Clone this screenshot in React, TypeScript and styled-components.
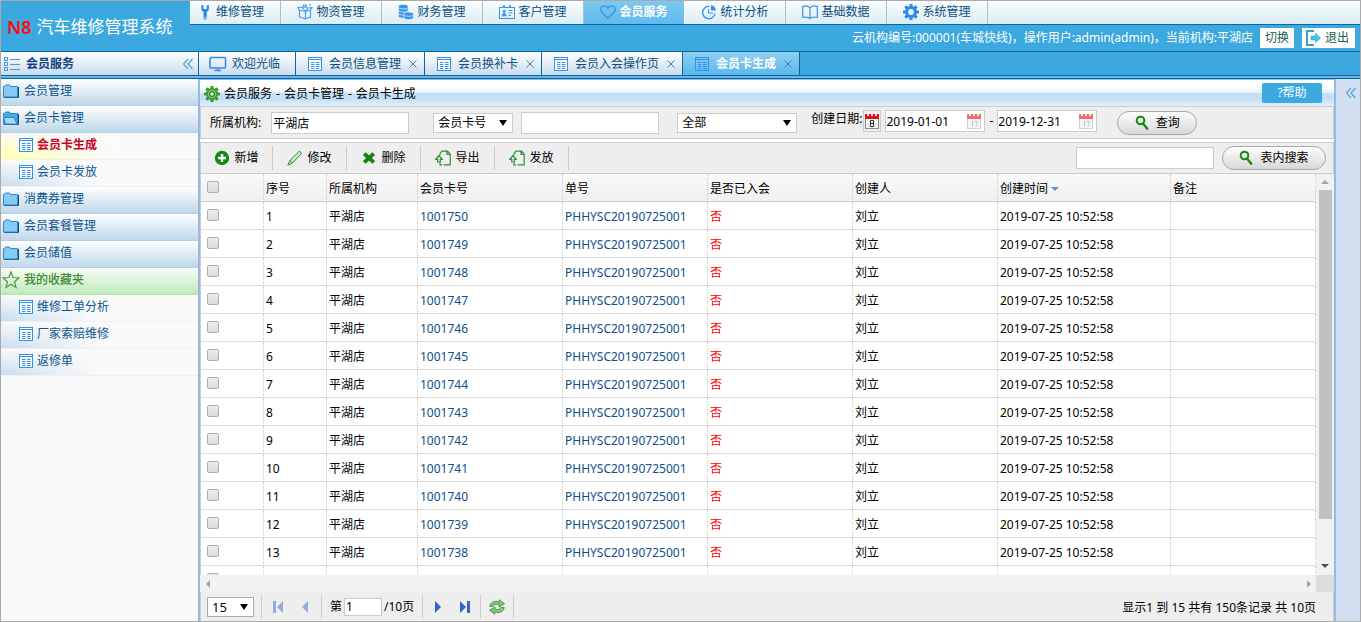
import React from "react";
import styled, { createGlobalStyle, css } from "styled-components";

const GlobalStyle = createGlobalStyle`
  *, *::before, *::after { box-sizing: border-box; }
  body { margin: 0; }
  body, button, input, select {
    font-family: "Noto Sans", "Noto Sans CJK SC", sans-serif;
    font-size: 12px;
    line-height: 16px;
    color: #000;
  }
  button { margin: 0; padding: 0; border: 0; background: none; cursor: pointer; white-space: nowrap; }
  a { text-decoration: none; color: inherit; }
  svg { display: block; flex: none; }
`;

/* ---------- icons ---------- */

const WrenchIcon = () => (
  <svg width="16" height="16" viewBox="0 0 16 16" fill="#2e8ae6">
    <path d="M4.300 1v3.800c0 1.500 1 2.600 2.200 3.100V14a1.600 1.600 0 0 0 3.200 0V7.900c1.300-.5 2.200-1.600 2.200-3.100V1L9.700 1.500V5H6.500V1.500z" />
    <circle cx="8.100" cy="13.800" r=".8" fill="#eef8fb" />
  </svg>
);

const BoxIcon = () => (
  <svg width="16" height="16" viewBox="0 0 16 16" fill="none" stroke="#4a9be8" strokeWidth="1.200" strokeLinejoin="round">
    <path d="M2.500 6v7l6 2 5-2V6M2.500 6l6 1.500L13.500 6M8.500 7.500V15M2.500 6L.7 3.500 5 3l3.500 4.500L11 4l4.300-.3L13.500 6" />
    <path d="M6.500 1h3v2.200h-3zM12 1l2-.3" />
  </svg>
);

const CoinsIcon = () => (
  <svg width="16" height="16" viewBox="0 0 16 16" fill="#3d93ea" stroke="#e9f6fb" strokeWidth=".7">
    <path d="M.4 3v9.200c0 1.100 2 2 4.900 2s4.900-.9 4.900-2V3z" />
    <ellipse cx="5.300" cy="2.700" rx="4.900" ry="2.200" />
    <path d="M.4 6c0 1.200 2 2.100 4.900 2s4.900-.9 4.900-2M.4 9.200c0 1.200 2 2.100 4.900 2" fill="none" />
    <path d="M5.800 10.500v3c0 1.200 2 2.200 4.900 2.200s4.900-1 4.900-2.200v-3z" />
    <ellipse cx="10.700" cy="10.200" rx="4.900" ry="2.100" />
  </svg>
);

const IdCardIcon = () => (
  <svg width="16" height="16" viewBox="0 0 16 16" fill="none" stroke="#3d93ea">
    <rect x=".5" y="3.500" width="15" height="11" />
    <path d="M5 1v3M11 1v3" strokeWidth="1.800" />
    <circle cx="5.200" cy="7.200" r="1.500" fill="#3d93ea" stroke="none" />
    <path d="M2.800 12.200c0-4.200 4.800-4.200 4.800 0z" fill="#3d93ea" stroke="none" />
    <path d="M9.500 6.500h4M9.500 9h4M9.500 11.500h2.500" />
  </svg>
);

const HeartIcon = () => (
  <svg width="16" height="16" viewBox="0 0 16 16" fill="none" stroke="#2e8ae6" strokeWidth="1.100">
    <path d="M8 14.500L1.800 8.200C-.6 5.300 1 1.700 4.200 1.700c1.900 0 3.200 1.200 3.800 2.400.6-1.200 1.900-2.400 3.800-2.400 3.200 0 4.800 3.600 2.400 6.500z" />
  </svg>
);

const PieIcon = () => (
  <svg width="16" height="16" viewBox="0 0 16 16" fill="none" stroke="#3d93ea" strokeWidth="1.400">
    <path d="M8 2.300A6.200 6.200 0 1 0 14 9.500" />
    <path d="M7.500 5v4H12" strokeWidth="1.100" />
    <path d="M9.800 1.200v5.300h5C14.800 3.400 12.800 1.200 9.800 1.200z" fill="#3d93ea" stroke="none" />
  </svg>
);

const BookIcon = () => (
  <svg width="16" height="16" viewBox="0 0 16 16" fill="none" stroke="#3d93ea" strokeWidth="1.200" strokeLinejoin="round">
    <path d="M8 4C6.500 2 3.500 1.500.7 2.300v11.200c2.800-.6 5.800-.4 7.300 1.200 1.500-1.600 4.500-1.800 7.300-1.200V2.300C12.500 1.500 9.500 2 8 4zM8 4v10.500" />
  </svg>
);

const GearIcon = ({ green }: { green?: boolean }) => (
  <svg width="16" height="16" viewBox="0 0 16 16" fill={green ? "#3c9a33" : "#2e8ae6"}>
    {[0, 45, 90, 135].map((a) => (
      <rect key={a} x="6.400" y="0" width="3.200" height="16" rx=".5" transform={`rotate(${a} 8 8)`} />
    ))}
    <circle cx="8" cy="8" r="6" />
    {green && <circle cx="8" cy="8" r="4.200" fill="#7ccf63" />}
    <circle cx="8" cy="8" r="2.900" fill={green ? "#2f7d2a" : "#eef8fb"} />
    {green && <circle cx="8" cy="8" r="1.700" fill="#f2faff" />}
  </svg>
);

const ListIcon = () => (
  <svg width="16" height="16" viewBox="0 0 16 16" fill="none" stroke="#3d93ea">
    <path d="M.5 1.500h3v3h-3zM.5 6.500h3v3h-3zM.5 11.500h3v3h-3z" />
    <path d="M6 3.500h10M6 8.500h10M6 13.500h10" stroke="#5f92bd" />
  </svg>
);

const ChevronsIcon = () => (
  <svg width="12" height="12" viewBox="0 0 12 12" fill="none" stroke="#58a3de" strokeWidth="1.200">
    <path d="M6 1L1.500 6 6 11M10.500 1L6 6l4.500 5" />
  </svg>
);

const MonitorIcon = () => (
  <svg width="18" height="16" viewBox="0 0 18 16" fill="none" stroke="#2e8ae6" strokeWidth="1.500">
    <rect x="1" y="1.500" width="15.500" height="10.500" rx="1" />
    <path d="M8.700 12v2.500M5.500 14.500h6.500" />
  </svg>
);

const TableIcon = ({ plain }: { plain?: boolean }) => (
  <svg width="14" height="14" viewBox="0 0 14 14" fill="none" stroke="#2e90f0">
    <rect x=".5" y=".5" width="13" height="13" fill={plain ? "none" : "#fff"} />
    <path d="M1 2.500h12" />
    <path d="M3 5.500h3.500M3 7.500h3.500M3 9.500h3.500M3 11.500h3.500M8 5.500h3.500M8 7.500h3.500M8 9.500h3.500M8 11.500h3.500" />
  </svg>
);

const CloseIcon = () => (
  <svg width="8" height="8" viewBox="0 0 8 8" stroke="#3f7fb5" fill="none">
    <path d="M.5.500l7 7M7.500.500l-7 7" />
  </svg>
);

const FolderIcon = ({ open }: { open?: boolean }) => (
  <svg width="16" height="16" viewBox="0 0 16 16">
    <path d="M1 14.500h14.500V4" fill="none" stroke="#104a72" />
    <path d="M.5 3.500h1l1-1.500h4l1 1.500h7v10.500H.5z" fill={open ? "#4aa9df" : "#86caf8"} stroke="#2a8acb" />
    {open && <path d="M.5 7.500h10.500l3 6.500H2.500z" fill="#a3daf8" stroke="#2a8acb" />}
  </svg>
);

const StarIcon = () => (
  <svg width="16" height="16" viewBox="1 1 16 16" fill="none" stroke="#4f9a45" strokeWidth="1.200" overflow="visible">
    <path d="M9 1l2.100 5.500 5.900.4-4.500 3.800 1.500 5.800L9 13.300l-5 3.200 1.500-5.800L1 6.900l5.900-.4z" />
  </svg>
);

const ExitIcon = () => (
  <svg width="16" height="16" viewBox="0 0 16 16">
    <path d="M9 1H2v14h7" fill="none" stroke="#3e9fc4" strokeWidth="2" />
    <path d="M6 6h4.500V3.200L15.500 8l-5 4.800V10H6z" fill="#3dc8ee" stroke="#2ba6d2" strokeWidth=".6" />
  </svg>
);

const SearchIcon = () => (
  <svg width="14" height="16" viewBox="0 0 14 16" fill="none" stroke="#128a12">
    <circle cx="5.500" cy="5.500" r="3.800" strokeWidth="2" />
    <path d="M8 8.500l4.300 5.200" strokeWidth="2.400" strokeLinecap="round" />
  </svg>
);

const CalendarIcon = ({ faded }: { faded?: boolean }) => (
  <svg width="16" height="16" viewBox="0 0 16 16" opacity={faded ? 0.6 : 1}>
    <rect x="1.500" y="5.500" width="13" height="10" fill="#f1f1f1" stroke={faded ? "#b5b5b5" : "#8b8b8b"} />
    <rect x="1" y="1" width="14" height="5" fill="#d81512" />
    <path d="M4 0v3M8 0v3M12 0v3" stroke="#fff" strokeWidth="1.600" />
    <path
      d={faded ? "M5.500 8.500h1v5M8.500 8.500h3l-1.500 5" : "M6.500 7.500h3v6h-3zM6.500 10.500h3"}
      fill="none"
      stroke={faded ? "#999" : "#333"}
    />
  </svg>
);

const PlusIcon = () => (
  <svg width="16" height="16" viewBox="0 0 16 16">
    <circle cx="8" cy="8" r="7.200" fill="#0f8a14" />
    <path d="M8 4v8M4 8h8" stroke="#fff" strokeWidth="2.400" />
  </svg>
);

const PencilIcon = () => (
  <svg width="16" height="16" viewBox="0 0 16 16" fill="#cfe9cd" stroke="#2f8f33">
    <path d="M.8 15.200L3 10.400 12.300 1.200l2.500 2L5.500 13z" />
    <path d="M3 10.400L5.500 13" />
  </svg>
);

const CrossIcon = () => (
  <svg width="16" height="16" viewBox="0 0 16 16" stroke="#118316" strokeWidth="4">
    <path d="M3.200 3.600l9.600 8.800M12.800 3.600l-9.600 8.800" />
  </svg>
);

const ExportIcon = () => (
  <svg width="16" height="16" viewBox="0 0 16 16" fill="none" stroke="#2f8f33" strokeWidth="1.200">
    <path d="M5 5V3.500L7 1.200h5.500L15.200 4v10.800H8.500M12 1.500V4.500h3" />
    <path d="M4 5.500L.8 9.300h1.900V12H5.300V9.300h1.900zM5 12.800v2h2" fill="#e4f3e2" />
  </svg>
);

const RefreshIcon = () => (
  <svg width="16" height="16" viewBox="0 0 16 16" fill="#7cc873" stroke="#3c8c37" strokeWidth=".8">
    <path d="M.8 7.500C1.200 3.200 6 1.200 10.300 3V.8L15.500 4.800 10 8V5.800C7.300 4.800 5 5.500 4.200 7.500z" />
    <path d="M15.200 8.500c-.4 4.300-5.200 6.300-9.500 4.500v2.200L.5 11.200 6 8v2.200c2.700 1 5 .3 5.800-1.700z" />
  </svg>
);

const PagerIcon = ({ kind }: { kind: "first" | "prev" | "next" | "last" }) => {
  const enabled = kind === "next" || kind === "last";
  const bar = kind === "first" || kind === "last";
  return (
    <svg width="12" height="14" viewBox="0 0 12 14" fill={enabled ? "#2f66cc" : "#8facdf"}>
      <g transform={enabled ? undefined : "translate(12 0) scale(-1 1)"}>
        <path d={bar ? "M1 1l6 6-6 6z" : "M3 1l6 6-6 6z"} />
        {bar && <rect x="8" y="1" width="3" height="12" />}
      </g>
    </svg>
  );
};

/* ---------- page header ---------- */

const Page = styled.div`
  display: flex;
  flex-direction: column;
  height: 100vh;
  min-width: 1200px;
  overflow: hidden;
  border: 1px solid #aaaaaa;
  background: #fff;
`;

const Header = styled.header`
  display: flex;
  height: 50px;
  flex: none;
  background: #3ba9e0;
`;

const Brand = styled.h1`
  display: flex;
  align-items: center;
  gap: 5px;
  width: 189px;
  flex: none;
  margin: 0;
  padding: 2px 0 0 6px;
  font-size: 17px;
  line-height: 24px;
  font-weight: 400;
  color: #fff;
  white-space: nowrap;
`;

const BrandMark = styled.span`
  font-size: 18px;
  font-weight: 600;
  color: #ff0a0a;
`;

const HeaderMain = styled.div`
  flex: 1;
  min-width: 0;
`;

const Nav = styled.nav`
  display: flex;
  height: 24px;
  border-bottom: 1px solid #0a679f;
  background: linear-gradient(#fbfdfe, #d9edf4);
`;

const NavLink = styled.a<{ $active?: boolean }>`
  display: flex;
  align-items: center;
  justify-content: center;
  gap: 3px;
  width: 101px;
  padding-bottom: 1px;
  border-right: 1px solid #a9bfc9;
  color: #0d4f80;
  &:first-child {
    justify-content: flex-start;
    width: 91px;
    padding-left: 7px;
  }
  ${(p) =>
    p.$active &&
    css`
      border-right-color: #fff;
      background: linear-gradient(#7cc8f1, #5fbaf0);
      color: #fff;
      font-weight: 700;
    `}
`;

const UserBar = styled.div`
  display: flex;
  align-items: center;
  justify-content: flex-end;
  gap: 7px;
  padding: 3px 5px 0 0;
  color: #fff;
`;

const UserButton = styled.button`
  display: flex;
  align-items: center;
  gap: 4px;
  height: 20px;
  padding: 0 5px;
  background: #fff;
  color: #17614f;
  & + & { margin-left: 1px; padding: 0 6px 0 3px; }
`;

/* ---------- tab strip ---------- */

const TabStrip = styled.div`
  display: flex;
  height: 25px;
  flex: none;
  border-top: 1px solid #0a679f;
  border-bottom: 1px solid #0a679f;
  background: #3ba9e0;
`;

const StripLine = styled.div`
  height: 3px;
  flex: none;
  border-bottom: 1px solid #0a679f;
  background: #62b8ea;
`;

const SideTitle = styled.div`
  display: flex;
  align-items: center;
  gap: 6px;
  width: 198px;
  flex: none;
  padding: 0 4px 0 3px;
  border-right: 1px solid #0a679f;
  background: linear-gradient(#fff, #c9dcee);
  color: #10427f;
  font-weight: 700;
  & > span { flex: 1; }
`;

const Tab = styled.div<{ $active?: boolean }>`
  display: flex;
  align-items: center;
  padding: 1px 7px 0 12px;
  border-right: 1px solid #0a679f;
  background: ${(p) => (p.$active ? "linear-gradient(#8fd0f3, #5cb7ea)" : "linear-gradient(#fff, #c9dcee)")};
  color: ${(p) => (p.$active ? "#fff" : "#0d4f80")};
  font-weight: ${(p) => (p.$active ? 700 : 400)};
  & > a { display: flex; align-items: center; gap: 7px; }
  & > button { margin-left: 8px; }
`;

const HomeTab = styled(Tab)`
  padding: 1px 15px 0 10px;
  & > a { gap: 5px; }
`;

/* ---------- body columns ---------- */

const Body = styled.div`
  display: flex;
  flex: 1;
  min-height: 0;
`;

const Sidebar = styled.aside`
  width: 197px;
  flex: none;
  background: #fafafa;
`;

const Group = styled.a<{ $green?: boolean }>`
  display: flex;
  align-items: center;
  gap: 5px;
  height: 27px;
  padding: 0 2px 3px;
  border-top: 1px solid #fff;
  border-bottom: 1px solid ${(p) => (p.$green ? "#b5e2b0" : "#b0d0e8")};
  background: ${(p) => (p.$green ? "linear-gradient(#f5fbf4, #bfeabd)" : "linear-gradient(#fbfdfe, #bfd7ea)")};
  color: ${(p) => (p.$green ? "#3c8a30" : "#0d5590")};
  font-weight: ${(p) => (p.$green ? 500 : 400)};
`;

const SubItem = styled.a<{ $active?: boolean }>`
  display: flex;
  align-items: center;
  gap: 4px;
  height: 27px;
  padding: 0 0 3px 18px;
  border-bottom: 1px solid #f0f0f3;
  background:
    linear-gradient(#fafafa, rgba(250, 250, 250, 0)),
    linear-gradient(90deg, ${(p) => (p.$active ? "#ffffae, #fafafa 60%" : "#c8dcee, #fafafa 50%")});
  color: ${(p) => (p.$active ? "#c8052c" : "#0d5590")};
  font-weight: ${(p) => (p.$active ? 700 : 400)};
`;

const Main = styled.main`
  display: flex;
  flex-direction: column;
  flex: 1;
  min-width: 0;
  border: solid #98b9e8;
  border-width: 1px 2px 0;
  background: #fff;
`;

const RightRail = styled.aside`
  width: 24px;
  flex: none;
  padding: 8px 0 0 9px;
  background: #d2dff1;
`;

const TitleBar = styled.div`
  display: flex;
  align-items: center;
  justify-content: space-between;
  height: 26px;
  flex: none;
  padding: 0 12px 0 4px;
  background: linear-gradient(#fff 30%, #e6f2fb 48%, #c3e0f6 50%, #c6e1f6 75%, #e2f0fa);
`;

const Crumb = styled.h2`
  display: flex;
  align-items: center;
  gap: 4px;
  margin: 0;
  padding-top: 2px;
  font-size: 12px;
  font-weight: 400;
`;

const HelpButton = styled.button`
  width: 60px;
  height: 20px;
  border-radius: 2px;
  background: #3ba9e0;
  color: #fff;
`;

/* ---------- filter and tool bars ---------- */

const FilterBar = styled.form`
  display: flex;
  align-items: center;
  height: 33px;
  flex: none;
  padding-left: 9px;
  border: 1px solid #cccccc;
  background: #eeeeee;
`;

const Field = styled.label`
  display: flex;
  align-items: center;
  gap: 10px;
  margin-right: 24px;
  white-space: nowrap;
`;

const TextInput = styled.input`
  width: 138px;
  height: 22px;
  padding: 0 1px;
  border: 1px solid #cccccc;
  background: #fff;
  outline: 0;
`;

const SelectBox = styled.span<{ $w: number }>`
  position: relative;
  display: inline-block;
  width: ${(p) => p.$w}px;
  height: 20px;
  &::after {
    content: "";
    position: absolute;
    top: 7px;
    right: 6px;
    border: solid transparent;
    border-width: 6px 4px 0;
    border-top-color: #000;
    pointer-events: none;
  }
  & > select {
    appearance: none;
    display: block;
    width: 100%;
    height: 100%;
    padding: 0 4px;
    border: 1px solid #cccccc;
    border-radius: 0;
    background: #fff;
  }
`;

const FieldSelect = styled(SelectBox)`
  margin-right: 8px;
`;

const StatusSelect = styled(SelectBox)`
  margin-left: 18px;
`;

const PageSizeSelect = styled(SelectBox)`
  & > select {
    border-color: #aaaaaa;
    font-size: 13px;
  }
`;

const DateGroup = styled.fieldset`
  display: flex;
  align-items: center;
  margin: 0 20px 3px 14px;
  padding: 0;
  border: 0;
  white-space: nowrap;
`;

const DateLabel = styled.label`
  padding: 0 1px 4px 0;
`;

const CalendarButton = styled.button`
  display: flex;
  align-items: center;
  justify-content: center;
  width: 18px;
  height: 22px;
  margin-right: 4px;
  border: 1px solid #cccccc;
`;

const DateBox = styled.span`
  display: flex;
  align-items: center;
  height: 22px;
  padding-right: 2px;
  border: 1px solid #cccccc;
  background: #fff;
  & > input { width: 80px; height: 20px; padding: 0; border: 0; outline: 0; background: none; }
`;

const Dash = styled.span`
  padding: 0 4px;
`;

const PillButton = styled.button<{ $w: number }>`
  display: flex;
  align-items: center;
  justify-content: center;
  gap: 7px;
  width: ${(p) => p.$w}px;
  height: 24px;
  border: 1px solid #a8a8a8;
  border-radius: 12px;
  background: linear-gradient(#fdfdfd, #d8d8d8);
`;

const Toolbar = styled.div`
  display: flex;
  align-items: center;
  height: 32px;
  flex: none;
  margin-top: 3px;
  padding-right: 7px;
  border: 1px solid #cccccc;
  background: #eeeeee;
`;

const ToolButton = styled.button`
  display: flex;
  align-items: center;
  justify-content: center;
  gap: 4px;
  width: 74px;
  height: 24px;
  border-right: 1px solid #cccccc;
  &:first-child { width: 72px; }
`;

const TableSearch = styled.div`
  display: flex;
  align-items: center;
  gap: 8px;
  margin-left: auto;
`;

/* ---------- grid ---------- */

const GridArea = styled.div`
  display: grid;
  grid-template-columns: minmax(0, 1fr) 18px;
  grid-template-rows: minmax(0, 1fr) 17px;
  flex: 1;
  min-height: 0;
`;

const GridView = styled.div`
  overflow: hidden;
  border-left: 1px solid #cccccc;
`;

const Grid = styled.table`
  width: 100%;
  table-layout: fixed;
  border-collapse: separate;
  border-spacing: 0;
  & th, & td {
    height: 28px;
    padding: 2px 2px 0;
    border-right: 1px dotted #cccccc;
    border-bottom: 1px solid #dddddd;
    text-align: left;
    font-weight: 400;
    white-space: nowrap;
  }
  & th { background: linear-gradient(#f9f9f9, #f0f0f0); border-bottom-color: #cccccc; }
  & th:first-child, & td:first-child { padding: 0 0 1px 6px; }
  & input {
    appearance: none;
    display: block;
    width: 12px;
    height: 12px;
    margin: 0;
    border: 1px solid #adadad;
    border-radius: 2px;
    background: linear-gradient(#ececec, #dcdcdc);
  }
`;

const CellLink = styled.a`
  color: #0d4f8b;
`;

const Alert = styled.span`
  color: #ff0000;
`;

const SortMark = styled.span`
  display: inline-block;
  margin: 0 0 2px 3px;
  border: solid transparent;
  border-width: 4px 4px 0;
  border-top-color: #5b8fd6;
`;

const VScroll = styled.div`
  display: flex;
  flex-direction: column;
  align-items: center;
  justify-content: space-between;
  padding: 6px 0 7px;
  background: #f1f1f1;
`;

const VThumb = styled.div`
  width: 13px;
  flex: 1;
  margin: 6px 0 45px;
  background: #c1c1c1;
`;

const HScroll = styled.div`
  display: flex;
  align-items: center;
  justify-content: space-between;
  padding: 0 5px 0 6px;
  background: #f1f1f1;
`;

const Corner = styled.div`
  background: #dcdcdc;
`;

const Arrow = styled.i<{ $dir: "up" | "down" | "left" | "right" }>`
  flex: none;
  border: 4px solid transparent;
  ${(p) => p.$dir === "up" && css`border-top-width: 0; border-bottom-color: #a3a3a3;`}
  ${(p) => p.$dir === "down" && css`border-bottom-width: 0; border-top-color: #505050;`}
  ${(p) => p.$dir === "left" && css`border-left-width: 0; border-right-color: #a3a3a3;`}
  ${(p) => p.$dir === "right" && css`border-right-width: 0; border-left-color: #a3a3a3;`}
`;

/* ---------- pager ---------- */

const Pager = styled.footer`
  display: flex;
  align-items: center;
  height: 29px;
  flex: none;
  padding: 0 17px 0 6px;
  border: solid #cccccc;
  border-width: 0 1px;
  background: #eeeeee;
`;

const PagerGroup = styled.div<{ $pad: number; $gap: number }>`
  display: flex;
  align-items: center;
  gap: ${(p) => p.$gap}px;
  height: 24px;
  padding: 0 ${(p) => p.$pad}px;
  border-right: 1px solid #cccccc;
  white-space: nowrap;
`;

const SizeGroup = styled(PagerGroup)`
  padding-left: 0;
`;

const PageInput = styled.input`
  width: 38px;
  height: 18px;
  padding: 0 1px;
  border: 1px solid #cccccc;
  background: #fff;
`;

const Summary = styled.p`
  margin: 0 0 0 auto;
  padding-top: 3px;
`;

/* ---------- data ---------- */

const navItems = [
  { label: "维修管理", icon: <WrenchIcon /> },
  { label: "物资管理", icon: <BoxIcon /> },
  { label: "财务管理", icon: <CoinsIcon /> },
  { label: "客户管理", icon: <IdCardIcon /> },
  { label: "会员服务", icon: <HeartIcon />, active: true },
  { label: "统计分析", icon: <PieIcon /> },
  { label: "基础数据", icon: <BookIcon /> },
  { label: "系统管理", icon: <GearIcon /> },
];

const tabs = ["会员信息管理", "会员换补卡", "会员入会操作页", "会员卡生成"];
const currentTab = "会员卡生成";

const tools = [
  { label: "新增", icon: <PlusIcon /> },
  { label: "修改", icon: <PencilIcon /> },
  { label: "删除", icon: <CrossIcon /> },
  { label: "导出", icon: <ExportIcon /> },
  { label: "发放", icon: <ExportIcon /> },
];

const columnWidths = [63, 63, 91, 145, 145, 145, 145, 173];
const columns = ["序号", "所属机构", "会员卡号", "单号", "是否已入会", "创建人", "创建时间", "备注"];
const rows = Array.from({ length: 13 }, (_, i) => ({ no: i + 1, card: 1001750 - i }));

export default function App() {
  return (
    <>
      <GlobalStyle />
      <Page>
        <Header>
          <Brand>
            <BrandMark>N8</BrandMark>
            汽车维修管理系统
          </Brand>
          <HeaderMain>
            <Nav>
              {navItems.map((n) => (
                <NavLink key={n.label} href="#" $active={n.active}>
                  {n.icon}
                  <span>{n.label}</span>
                </NavLink>
              ))}
            </Nav>
            <UserBar>
              <span>云机构编号:000001(车城快线)，操作用户:admin(admin)，当前机构:平湖店</span>
              <UserButton>切换</UserButton>
              <UserButton>
                <ExitIcon />
                退出
              </UserButton>
            </UserBar>
          </HeaderMain>
        </Header>

        <TabStrip>
          <SideTitle>
            <ListIcon />
            <span>会员服务</span>
            <button aria-label="收起菜单">
              <ChevronsIcon />
            </button>
          </SideTitle>
          <HomeTab>
            <a href="#">
              <MonitorIcon />
              <span>欢迎光临</span>
            </a>
          </HomeTab>
          {tabs.map((t) => (
            <Tab key={t} $active={t === currentTab}>
              <a href="#">
                <TableIcon plain={t === currentTab} />
                <span>{t}</span>
              </a>
              <button aria-label={`关闭${t}`}>
                <CloseIcon />
              </button>
            </Tab>
          ))}
        </TabStrip>
        <StripLine />

        <Body>
          <Sidebar>
            <Group href="#"><FolderIcon />会员管理</Group>
            <Group href="#"><FolderIcon open />会员卡管理</Group>
            <SubItem href="#" $active><TableIcon />会员卡生成</SubItem>
            <SubItem href="#"><TableIcon />会员卡发放</SubItem>
            <Group href="#"><FolderIcon />消费券管理</Group>
            <Group href="#"><FolderIcon />会员套餐管理</Group>
            <Group href="#"><FolderIcon />会员储值</Group>
            <Group href="#" $green><StarIcon />我的收藏夹</Group>
            <SubItem href="#"><TableIcon />维修工单分析</SubItem>
            <SubItem href="#"><TableIcon />厂家索赔维修</SubItem>
            <SubItem href="#"><TableIcon />返修单</SubItem>
          </Sidebar>

          <Main>
            <TitleBar>
              <Crumb>
                <GearIcon green />
                <span>会员服务</span>
                <span>-</span>
                <span>会员卡管理</span>
                <span>-</span>
                <span>会员卡生成</span>
              </Crumb>
              <HelpButton>?帮助</HelpButton>
            </TitleBar>

            <FilterBar onSubmit={(e) => e.preventDefault()}>
              <Field>
                所属机构:
                <TextInput defaultValue="平湖店" />
              </Field>
              <FieldSelect $w={80}>
                <select aria-label="查询字段">
                  <option>会员卡号</option>
                </select>
              </FieldSelect>
              <TextInput aria-label="查询内容" />
              <StatusSelect $w={120}>
                <select aria-label="入会状态">
                  <option>全部</option>
                </select>
              </StatusSelect>
              <DateGroup>
                <DateLabel htmlFor="date-from">创建日期:</DateLabel>
                <CalendarButton type="button" aria-label="选择日期">
                  <CalendarIcon />
                </CalendarButton>
                <DateBox>
                  <input id="date-from" defaultValue="2019-01-01" />
                  <CalendarIcon faded />
                </DateBox>
                <Dash>-</Dash>
                <DateBox>
                  <input aria-label="结束日期" defaultValue="2019-12-31" />
                  <CalendarIcon faded />
                </DateBox>
              </DateGroup>
              <PillButton type="submit" $w={80}>
                <SearchIcon />
                查询
              </PillButton>
            </FilterBar>

            <Toolbar>
              {tools.map((t) => (
                <ToolButton key={t.label}>
                  {t.icon}
                  {t.label}
                </ToolButton>
              ))}
              <TableSearch>
                <TextInput aria-label="表内搜索内容" />
                <PillButton $w={104}>
                  <SearchIcon />
                  表内搜索
                </PillButton>
              </TableSearch>
            </Toolbar>

            <GridArea>
              <GridView>
                <Grid>
                  <colgroup>
                    {columnWidths.map((w, i) => (
                      <col key={i} width={w} />
                    ))}
                    <col />
                  </colgroup>
                  <thead>
                    <tr>
                      <th>
                        <input type="checkbox" aria-label="全选" />
                      </th>
                      {columns.map((c) => (
                        <th key={c}>
                          {c}
                          {c === "创建时间" && <SortMark />}
                        </th>
                      ))}
                    </tr>
                  </thead>
                  <tbody>
                    {rows.map((r) => (
                      <tr key={r.no}>
                        <td>
                          <input type="checkbox" aria-label={`选择第${r.no}行`} />
                        </td>
                        <td>{r.no}</td>
                        <td>平湖店</td>
                        <td><CellLink href="#">{r.card}</CellLink></td>
                        <td><CellLink href="#">PHHYSC20190725001</CellLink></td>
                        <td><Alert>否</Alert></td>
                        <td>刘立</td>
                        <td>2019-07-25 10:52:58</td>
                        <td />
                      </tr>
                    ))}
                    <tr>
                      <td>
                        <input type="checkbox" aria-label="选择下一行" />
                      </td>
                      {columns.map((c) => (
                        <td key={c} />
                      ))}
                    </tr>
                  </tbody>
                </Grid>
              </GridView>
              <VScroll>
                <Arrow $dir="up" />
                <VThumb />
                <Arrow $dir="down" />
              </VScroll>
              <HScroll>
                <Arrow $dir="left" />
                <Arrow $dir="right" />
              </HScroll>
              <Corner />
            </GridArea>

            <Pager>
              <SizeGroup $pad={7} $gap={0}>
                <PageSizeSelect $w={47}>
                  <select aria-label="每页条数">
                    <option>15</option>
                  </select>
                </PageSizeSelect>
              </SizeGroup>
              <PagerGroup $pad={10} $gap={15}>
                <button aria-label="首页"><PagerIcon kind="first" /></button>
                <button aria-label="上一页"><PagerIcon kind="prev" /></button>
              </PagerGroup>
              <PagerGroup $pad={8} $gap={2}>
                <label htmlFor="page-no">第</label>
                <PageInput id="page-no" defaultValue="1" />
                <span>/10页</span>
              </PagerGroup>
              <PagerGroup $pad={9} $gap={15}>
                <button aria-label="下一页"><PagerIcon kind="next" /></button>
                <button aria-label="末页"><PagerIcon kind="last" /></button>
              </PagerGroup>
              <PagerGroup $pad={8} $gap={0}>
                <button aria-label="刷新"><RefreshIcon /></button>
              </PagerGroup>
              <Summary>显示1 到 15 共有 150条记录 共 10页</Summary>
            </Pager>
          </Main>

          <RightRail>
            <button aria-label="展开侧栏">
              <ChevronsIcon />
            </button>
          </RightRail>
        </Body>
      </Page>
    </>
  );
}
